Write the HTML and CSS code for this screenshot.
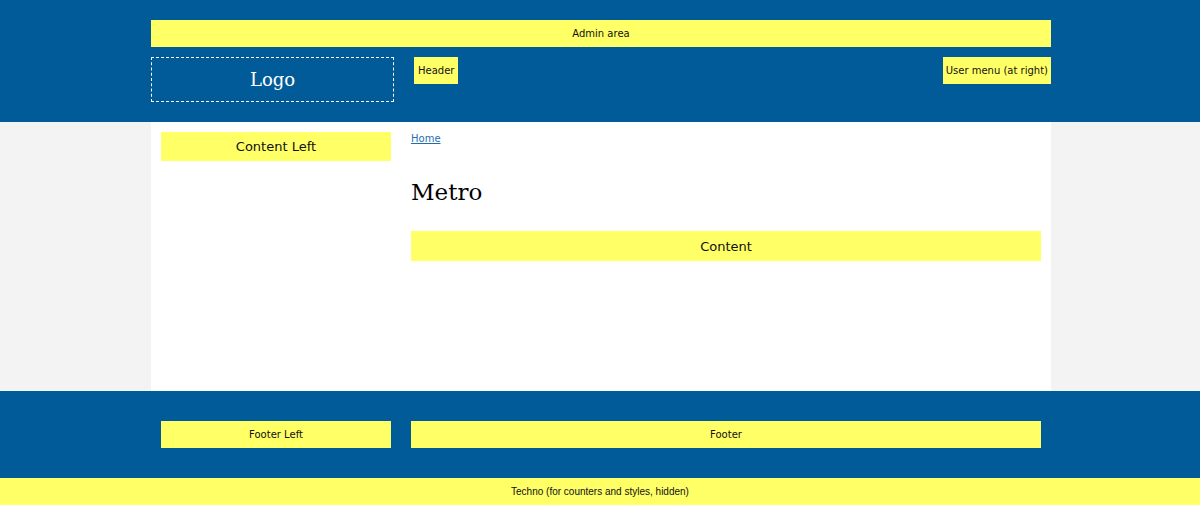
FILE: index.html
```html
<!DOCTYPE html>
<html>
<head>
<meta charset="utf-8">
<link rel="stylesheet" href="styles.css">
</head>
<body>
<header class="site-header">
  <div class="wrap">
    <div class="admin box">Admin area</div>
    <div class="header-row">
      <div class="logo">Logo</div>
      <div class="header-box box">Header</div>
      <div class="user-menu box">User menu (at right)</div>
    </div>
  </div>
</header>
<main class="wrap main">
  <aside class="sidebar">
    <div class="content-left box">Content Left</div>
  </aside>
  <section class="content">
    <a class="crumb" href="#">Home</a>
    <h1 class="title">Metro</h1>
    <div class="content-box box">Content</div>
  </section>
</main>
<footer class="site-footer">
  <div class="wrap footer-row">
    <div class="footer-left box">Footer Left</div>
    <div class="footer-main box">Footer</div>
  </div>
</footer>
<div class="techno">Techno (for counters and styles, hidden)</div>
</body>
</html>
```
FILE: styles.css
```css
html, body {
  margin: 0;
  padding: 0;
}
body {
  background: #f2f3f2;
  font-family: "DejaVu Sans", Verdana, sans-serif;
  color: #000;
}
.wrap {
  width: 900px;
  margin: 0 auto;
  box-sizing: border-box;
  position: relative;
  left: 1px;
}
.box {
  background: #ffff66;
  color: #111;
  display: flex;
  align-items: center;
  justify-content: center;
  box-sizing: border-box;
}
.site-header {
  background: #025b99;
  padding: 20px 0 20px;
}
.admin {
  height: 27px;
  font-size: 10px;
}
.header-row {
  display: flex;
  align-items: flex-start;
  margin-top: 10px;
}
.logo {
  width: 243px;
  height: 45px;
  box-sizing: border-box;
  border: 1px dashed #fff;
  color: #fff;
  font-family: "DejaVu Serif", Georgia, serif;
  font-size: 18px;
  display: flex;
  align-items: center;
  justify-content: center;
}
.header-box {
  margin-left: 20px;
  height: 27px;
  padding: 0 4px;
  font-size: 10px;
}
.user-menu {
  margin-left: auto;
  height: 27px;
  padding: 0 3px;
  font-size: 10px;
}
.main {
  background: #fff;
  display: flex;
  gap: 20px;
  padding: 10px;
  min-height: 269px;
}
.sidebar {
  width: 230px;
  flex: none;
}
.content-left {
  height: 29px;
  font-size: 13px;
}
.content {
  flex: 1;
}
.crumb {
  display: block;
  font-size: 10px;
  color: #1f6fb0;
  text-decoration: underline;
  margin-top: 1px;
  line-height: 12px;
}
.title {
  font-family: "DejaVu Serif", Georgia, serif;
  font-weight: normal;
  font-size: 23px;
  margin: 32px 0 0;
  line-height: 30px;
}
.content-box {
  margin-top: 24px;
  height: 30px;
  font-size: 13px;
}
.site-footer {
  background: #025b99;
  padding: 30px 0;
}
.footer-row {
  display: flex;
  gap: 20px;
  padding: 0 10px;
}
.footer-left {
  width: 230px;
  flex: none;
  height: 27px;
  font-size: 10px;
}
.footer-main {
  flex: 1;
  height: 27px;
  font-size: 10px;
}
.techno {
  background: #ffff66;
  height: 27px;
  display: flex;
  align-items: center;
  justify-content: center;
  font-family: "Liberation Sans", Arial, sans-serif;
  font-size: 10px;
  color: #111;
}
```
